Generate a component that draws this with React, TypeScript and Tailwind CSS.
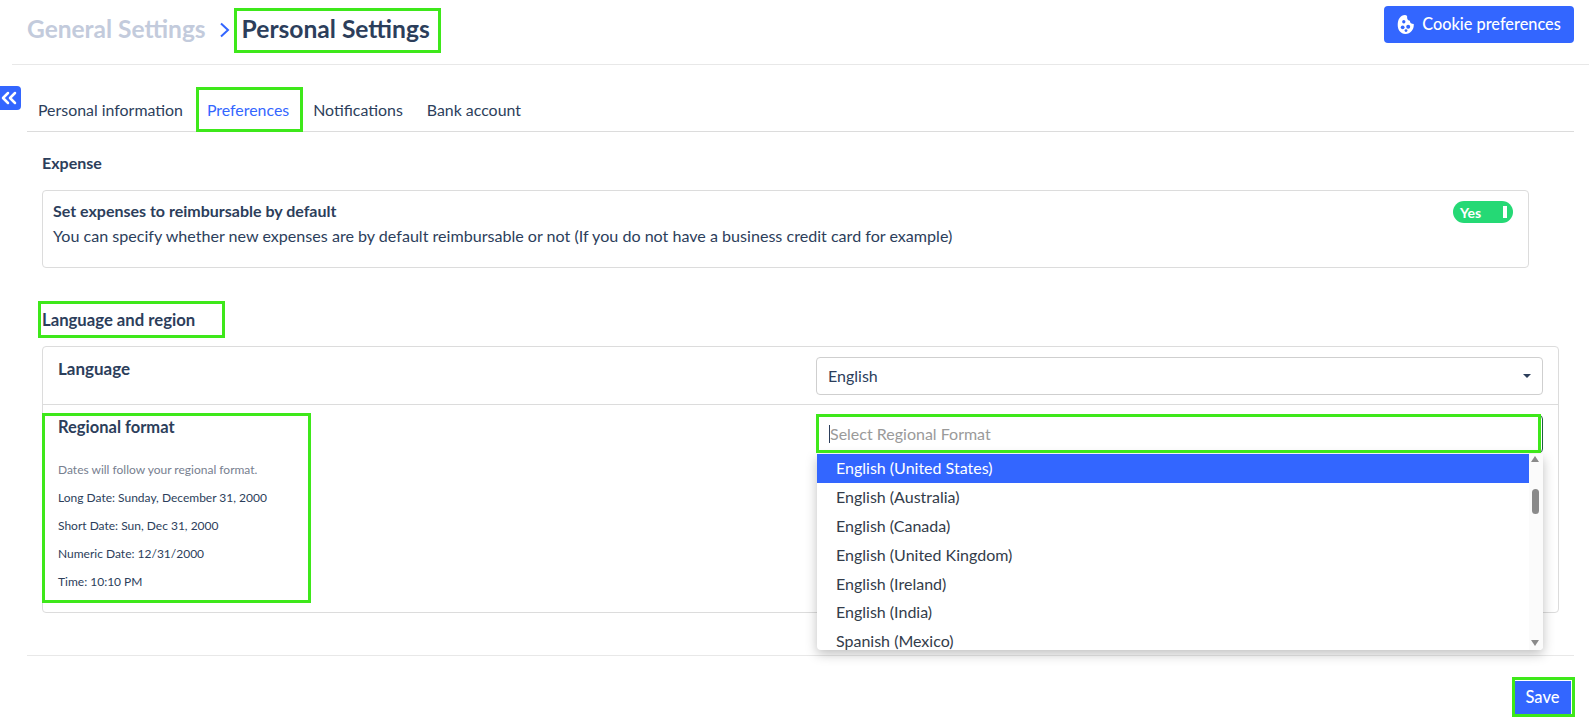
import { ChevronsLeft } from 'lucide-react'

const tabs = ['Personal information', 'Preferences', 'Notifications', 'Bank account']
const dates = ['Long Date: Sunday, December 31, 2000', 'Short Date: Sun, Dec 31, 2000', 'Numeric Date: 12/31/2000', 'Time: 10:10 PM']
const regions = ['English (United States)', 'English (Australia)', 'English (Canada)', 'English (United Kingdom)', 'English (Ireland)', 'English (India)', 'Spanish (Mexico)']

function CookieIcon() {
  return (
    <svg width="18" height="21" viewBox="0 0 16 19">
      <path d="M7 1C8.500 1 9.500 2 9 3.500 9 5.500 10.500 6 11.500 6 11.500 8 13 9 15 9 15.500 14 12 18 7.500 18 3 18 .5 14.500 .5 10 .5 5 3 1 7 1z" fill="#fff" />
      <circle cx="6" cy="7" r="1.500" fill="#3366ff" />
      <circle cx="5" cy="12" r="1.700" fill="#3366ff" />
      <circle cx="10" cy="11.500" r="1.800" fill="#3366ff" />
      <circle cx="8" cy="15" r="1.300" fill="#3366ff" />
    </svg>
  )
}

export default function App() {
  return (
    <div className="relative h-[720px] w-[1595px] overflow-hidden bg-white font-['Lato',sans-serif] text-[#2c3e5b]">
      <header className="ml-[12px] mr-[6px] flex h-[65px] items-start justify-between border-b border-[#e8e8e8] pl-[15px] pr-[15px]">
        <div className="flex h-[59px] items-center">
          <span className="text-[24.500px] font-bold text-[#c3cbdc]">General Settings</span>
          <svg className="ml-[13px] mr-[12px]" width="11" height="16" viewBox="0 0 11 16" fill="none" stroke="#3366ff" strokeWidth="2">
            <path d="M2 1.500 L9 8 L2 14.500" />
          </svg>
          <span className="text-[24.600px] font-bold">Personal Settings</span>
        </div>
        <button className="mt-[6px] flex h-[37px] w-[190px] items-center justify-center gap-[7px] rounded-[4px] bg-[#3366ff] text-[16.300px] font-medium text-white">
          <CookieIcon />
          Cookie preferences
        </button>
      </header>

      <main className="pl-[27px] pr-[21px]">
        <nav className="flex h-[67px] items-end gap-[24px] border-b border-[#dcdcdc] pb-[11px] pl-[11px]">
          {tabs.map(t => (
            <span key={t} className={t === 'Preferences' ? 'text-[15.900px] leading-[20px] text-[#3366ff]' : 'text-[15.900px] leading-[20px]'}>{t}</span>
          ))}
        </nav>

        <section className="pl-[15px]">
          <h2 className="pt-[21px] text-[16px] font-bold leading-[20px]">Expense</h2>
          <div className="mt-[17px] flex h-[78px] w-[1487px] items-start justify-between rounded-[4px] border border-[#dcdcdc] pl-[10px] pr-[15px] pt-[10px]">
            <div>
              <p className="-mt-[1px] text-[16px] font-bold leading-[22px]">Set expenses to reimbursable by default</p>
              <p className="mt-[3px] text-[16.100px] leading-[22px]">You can specify whether new expenses are by default reimbursable or not (If you do not have a business credit card for example)</p>
            </div>
            <div className="flex h-[22px] w-[60px] items-center justify-between rounded-full bg-[#25d975] pl-[7px] pr-[6px] text-[14px] font-bold text-white">
              Yes
              <span className="h-[12px] w-[4px] bg-white" />
            </div>
          </div>

          <h2 className="mt-[42px] text-[16.700px] font-bold leading-[20px]">Language and region</h2>
          <div className="mt-[16px] w-[1517px] rounded-[4px] border border-[#dcdcdc]">
            <div className="flex h-[58px] justify-between border-b border-[#dcdcdc] pl-[15px] pr-[15px] pt-[10px]">
              <p className="mt-[1px] text-[17px] font-bold leading-[22px]">Language</p>
              <div className="flex h-[38px] w-[727px] items-center justify-between rounded-[4px] border border-[#cfcfcf] pb-[1px] pl-[11px] pr-[11px] text-[16px]">
                English
                <span className="h-0 w-0 border-x-[4px] border-t-[4px] border-x-transparent border-t-[#2c3e5b]" />
              </div>
            </div>
            <div className="flex h-[207px] justify-between pl-[15px] pr-[15px] pt-[10px]">
              <div>
                <p className="mt-[1px] text-[16.500px] font-bold leading-[22px]">Regional format</p>
                <p className="mt-[23px] text-[12px] leading-[18px] text-[#77808f]">Dates will follow your regional format.</p>
                {dates.map(d => (
                  <p key={d} className="mt-[10px] text-[12px] leading-[18px]">{d}</p>
                ))}
              </div>
              <div className="flex h-[38px] w-[727px] items-center rounded-[4px] border border-[#1f5f3f] pl-[12px] text-[16px] text-[#9a9a9a]">
                <span className="h-[18px] w-px bg-[#2c3e5b]" />
                Select Regional Format
              </div>
            </div>
          </div>
        </section>

        <footer className="mt-[42px] flex h-[66px] justify-end border-t border-[#e8e8e8] pt-[25px]">
          <button className="mr-[3px] h-[35px] w-[57px] bg-[#3366ff] pb-[3px] text-[16.500px] font-medium text-white">Save</button>
        </footer>
      </main>

      <button className="absolute left-0 top-[86px] flex h-[24px] w-[21px] items-center justify-center rounded-r-[4px] bg-[#3366ff] pr-[3px] text-white">
        <ChevronsLeft className="shrink-0" size={24} strokeWidth={2.500} />
      </button>

      <div className="absolute left-[817px] top-[454px] flex h-[196px] w-[726px] overflow-hidden rounded-b-[4px] bg-white shadow-[0_4px_12px_rgba(0,0,0,0.25)]">
        <ul className="flex-1">
          {regions.map((r, i) => (
            <li key={r} className={i === 0 ? 'flex h-[28.800px] items-center bg-[#3366ff] pl-[19px] text-[16px] text-white' : 'flex h-[28.800px] items-center pl-[19px] text-[16px] text-[#333c4a]'}>{r}</li>
          ))}
        </ul>
        <div className="relative w-[14px] bg-[#fbfbfb]">
          <span className="absolute left-[2px] top-[2px] h-0 w-0 border-x-[4.500px] border-b-[6px] border-x-transparent border-b-[#8a8a8a]" />
          <span className="absolute left-[3px] top-[35px] h-[25px] w-[7px] rounded-full bg-[#8a8a8a]" />
          <span className="absolute bottom-[4px] left-[2px] h-0 w-0 border-x-[4.500px] border-t-[6px] border-x-transparent border-t-[#8a8a8a]" />
        </div>
      </div>

      {/* green marks drawn over the page */}
      <div className="pointer-events-none absolute left-[234px] top-[8px] h-[45px] w-[207px] border-[3px] border-[#3ee81a]" />
      <div className="pointer-events-none absolute left-[196px] top-[87px] h-[45px] w-[107px] border-[3px] border-[#3ee81a]" />
      <div className="pointer-events-none absolute left-[38px] top-[301px] h-[37px] w-[187px] border-[3px] border-[#3ee81a]" />
      <div className="pointer-events-none absolute left-[42px] top-[413px] h-[190px] w-[269px] border-[3px] border-[#3ee81a]" />
      <div className="pointer-events-none absolute left-[816px] top-[414px] h-[39px] w-[725px] border-[3px] border-[#3ee81a]" />
      <div className="pointer-events-none absolute left-[1512px] top-[677px] h-[40px] w-[63px] border-[3px] border-[#3ee81a]" />
    </div>
  )
}
